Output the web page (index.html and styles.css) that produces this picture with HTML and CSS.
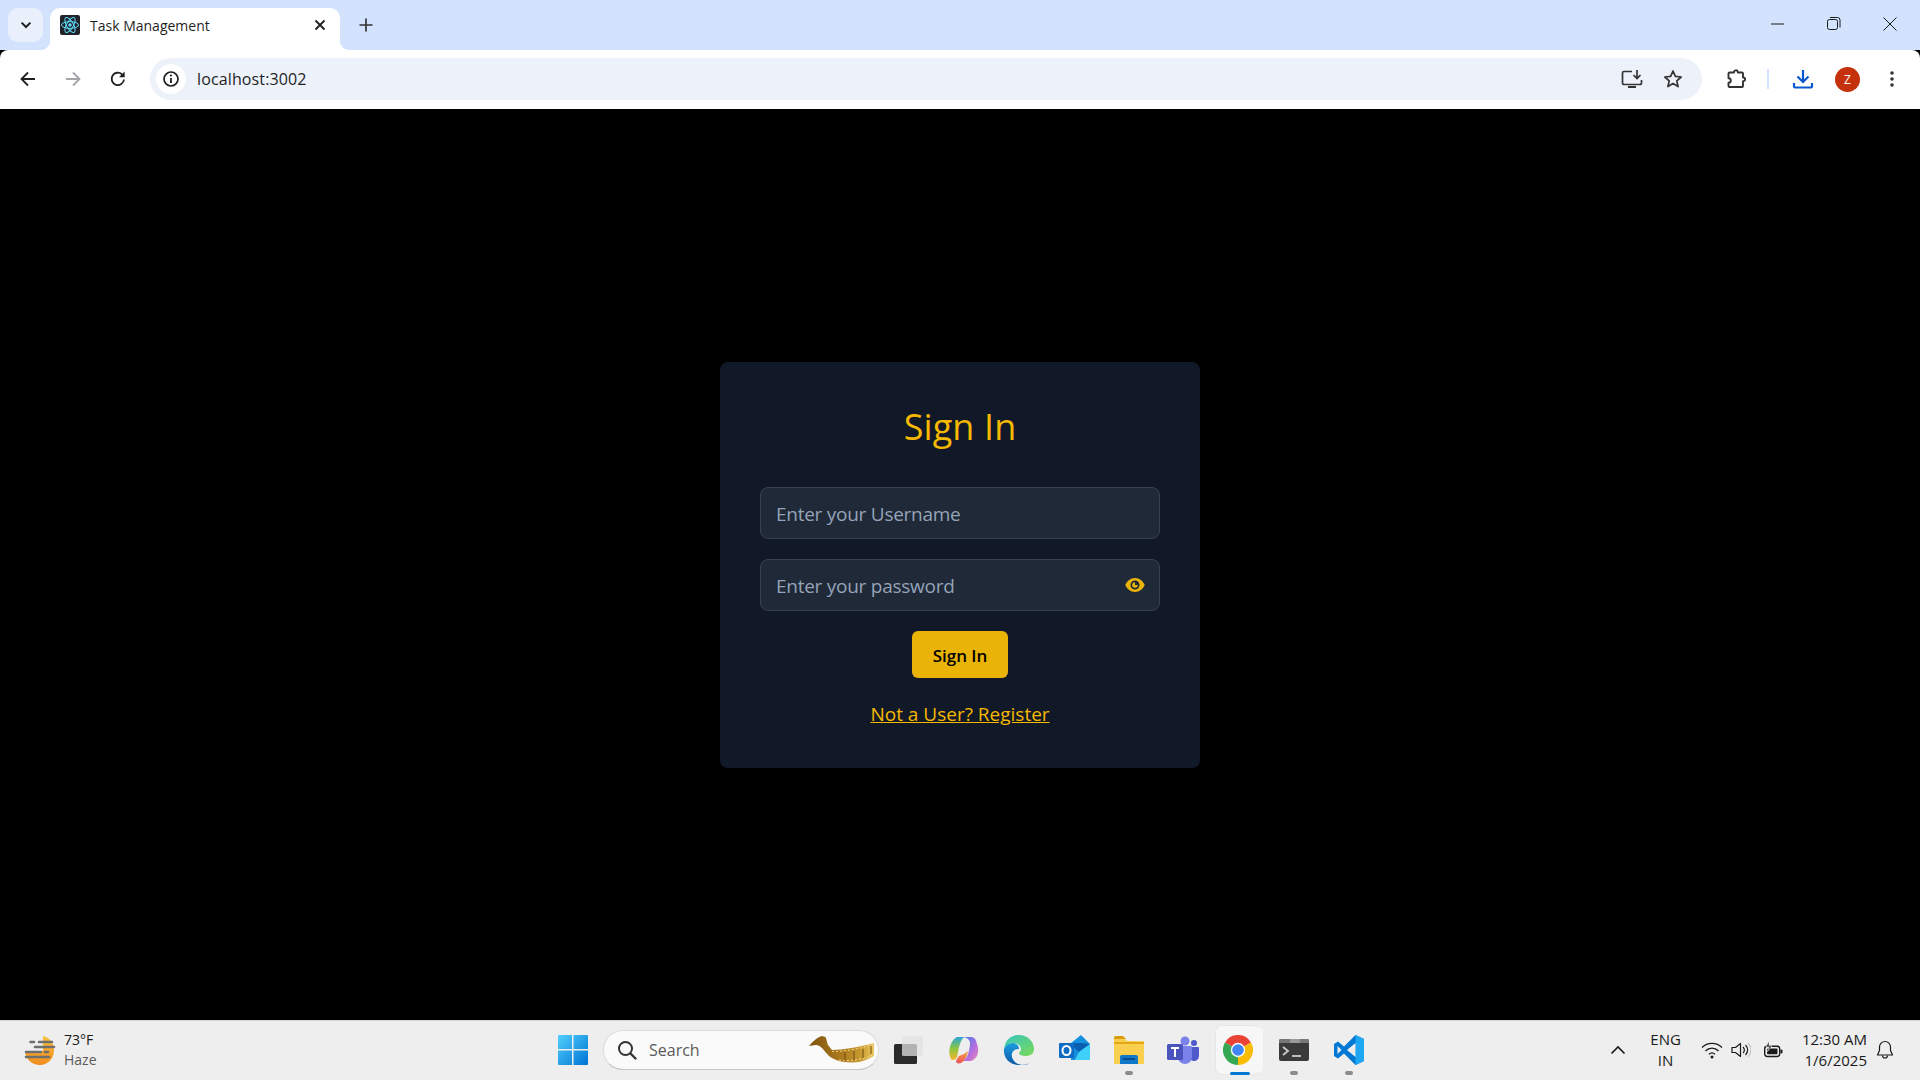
FILE: index.html
```html
<!DOCTYPE html>
<html lang="en">
<head>
<meta charset="utf-8">
<title>Task Management</title>
<link rel="stylesheet" href="styles.css">
</head>
<body>
<div class="tabstrip">
  <button class="tab-search" aria-label="Search tabs">
    <svg width="16" height="16" viewBox="0 0 16 16"><path d="M3.600 5.600 8 10l4.400-4.400" fill="none" stroke="#1f1f1f" stroke-width="2"/></svg>
  </button>
  <div class="tab">
    <svg class="favicon" width="20" height="20" viewBox="0 0 20 20">
      <rect width="20" height="20" rx="2" fill="#20232a"/>
      <g fill="none" stroke="#61dafb" stroke-width="1">
        <ellipse cx="10" cy="10" rx="8.500" ry="3.400"/>
        <ellipse cx="10" cy="10" rx="8.500" ry="3.400" transform="rotate(60 10 10)"/>
        <ellipse cx="10" cy="10" rx="8.500" ry="3.400" transform="rotate(120 10 10)"/>
      </g>
      <circle cx="10" cy="10" r="1.700" fill="#61dafb"/>
    </svg>
    <span class="tab-title">Task Management</span>
    <svg class="tab-close" width="12" height="12" viewBox="0 0 12 12"><path d="M1.500 1.500l9 9M10.500 1.500l-9 9" stroke="#1f1f1f" stroke-width="1.800"/></svg>
  </div>
  <svg class="new-tab" width="14" height="14" viewBox="0 0 14 14"><path d="M7 .5v13M.5 7h13" stroke="#333" stroke-width="1.700"/></svg>
  <div class="win-controls">
    <svg width="14" height="14" viewBox="0 0 14 14"><path d="M0 7h13" stroke="#1a1a1a" stroke-width="1"/></svg>
    <svg width="14" height="14" viewBox="0 0 14 14"><rect x=".5" y="2.500" width="10" height="10" rx="2" fill="none" stroke="#1a1a1a"/><path d="M3 .5h7.500a2.500 2.500 0 0 1 2.500 2.500v7.500" fill="none" stroke="#1a1a1a"/></svg>
    <svg width="14" height="14" viewBox="0 0 14 14"><path d="M.5.5l13 13M13.500.5l-13 13" stroke="#1a1a1a" stroke-width="1"/></svg>
  </div>
</div>

<div class="toolbar">
  <svg class="nav" width="18" height="18" viewBox="0 0 18 18"><path d="M16 9H2.500M9 2.500 2.500 9 9 15.500" fill="none" stroke="#1f1f1f" stroke-width="1.800"/></svg>
  <svg class="nav" width="18" height="18" viewBox="0 0 18 18"><path d="M2 9h13.500M9 2.500 15.500 9 9 15.500" fill="none" stroke="#a3a5a8" stroke-width="1.800"/></svg>
  <svg class="nav" width="18" height="18" viewBox="0 0 18 18"><path d="M15 9.500A6.200 6.200 0 1 1 13 4.300L15 6.300" fill="none" stroke="#1f1f1f" stroke-width="1.800"/><path d="M15.600 1.600v5.600h-5.600z" fill="#1f1f1f"/></svg>
  <div class="omnibox">
    <span class="site-info">
      <svg width="18" height="18" viewBox="0 0 18 18"><circle cx="9" cy="9" r="7" fill="none" stroke="#1f1f1f" stroke-width="1.700"/><path d="M9 8v5" stroke="#1f1f1f" stroke-width="1.800"/><circle cx="9" cy="5.500" r="1.100" fill="#1f1f1f"/></svg>
    </span>
    <span class="url">localhost:3002</span>
    <span class="spacer"></span>
    <svg class="omni-icon" width="22" height="20" viewBox="0 0 22 20"><path d="M11 2.500H3A1.500 1.500 0 0 0 1.500 4v10A1.500 1.500 0 0 0 3 15.500h16a1.500 1.500 0 0 0 1.500-1.500v-3" fill="none" stroke="#333" stroke-width="1.700"/><path d="M7 18h8" stroke="#333" stroke-width="2"/><path d="M16 1v8M12.500 6l3.500 3.500L19.500 6" fill="none" stroke="#333" stroke-width="1.700"/></svg>
    <svg class="omni-icon star" width="20" height="20" viewBox="0 0 20 20"><path d="M10 2l2.400 5.400 5.800.6-4.400 3.900 1.300 5.700-5.100-3-5.100 3 1.300-5.700L1.800 8l5.800-.6z" fill="none" stroke="#333" stroke-width="1.700" stroke-linejoin="round"/></svg>
  </div>
  <div class="tools">
    <svg width="20" height="20" viewBox="0 0 20 20"><path d="M8 3.500V2.800a2 2 0 0 1 3.500-.8l.4 1.500H16a1 1 0 0 1 1 1v4h.3a1.800 1.800 0 0 1 0 3.600H17V17a1 1 0 0 1-1 1H3.500a1 1 0 0 1-1-1v-3.200a2.200 2.200 0 0 0 0-4.600V4.500a1 1 0 0 1 1-1z" fill="none" stroke="#333" stroke-width="1.900" stroke-linejoin="round"/></svg>
    <span class="tool-sep"></span>
    <svg class="dl" width="22" height="22" viewBox="0 0 22 22"><path d="M11 2v12M5.500 8.500 11 14l5.500-5.500" fill="none" stroke="#0b57d0" stroke-width="2.200"/><path d="M2 15v3.500a1 1 0 0 0 1 1h16a1 1 0 0 0 1-1V15" fill="none" stroke="#0b57d0" stroke-width="2.200"/></svg>
    <span class="avatar">Z</span>
    <svg class="menu" width="6" height="18" viewBox="0 0 6 18"><circle cx="3" cy="3" r="1.800" fill="#333"/><circle cx="3" cy="9" r="1.800" fill="#333"/><circle cx="3" cy="15" r="1.800" fill="#333"/></svg>
  </div>
</div>

<main class="page">
  <form class="card">
    <h1 class="card-title">Sign In</h1>
    <div class="field"><span class="ph">Enter your Username</span></div>
    <div class="field"><span class="ph">Enter your password</span>
      <svg width="20" height="16" viewBox="0 0 20 16"><path fill-rule="evenodd" d="M10 1C5.500 1 2 4.200.3 8 2 11.800 5.500 15 10 15s8-3.200 9.700-7C18 4.200 14.500 1 10 1zm0 2.500a4.500 4.500 0 1 1 0 9 4.500 4.500 0 0 1 0-9z" fill="#eab308"/><path d="M10 5.200a2.800 2.800 0 1 0 2.800 2.800h-2.800z" fill="#eab308"/></svg>
    </div>
    <button class="submit" type="button">Sign In</button>
    <a class="register" href="#">Not a User? Register</a>
  </form>
</main>

<footer class="taskbar">
  <div class="weather">
    <svg width="32" height="30" viewBox="0 0 32 30">
      <defs><linearGradient id="sun" x1="0" y1="0" x2="0" y2="1"><stop offset="0" stop-color="#f8c23c"/><stop offset="1" stop-color="#f28c1c"/></linearGradient></defs>
      <path d="M19 1a14 14 0 0 1 11 14 14.500 14.500 0 0 1-29 1h18z" fill="url(#sun)"/>
      <g stroke="#6f6f6f" stroke-width="2.600" stroke-linecap="round">
        <path d="M6.500 7h3.500M15 7h13M11 12h19M2 17h15M21 17h3M2 22h23"/>
      </g>
    </svg>
    <div class="weather-text"><span class="temp">73°F</span><span class="cond">Haze</span></div>
  </div>

  <div class="centre">
    <svg class="start" width="30" height="30" viewBox="0 0 30 30">
      <defs><linearGradient id="win" x1="0" y1="0" x2="1" y2="1"><stop offset="0" stop-color="#4fd0fd"/><stop offset="1" stop-color="#0073d3"/></linearGradient></defs>
      <path d="M1 0h13v14H0V1a1 1 0 0 1 1-1zM15.500 0H29a1 1 0 0 1 1 1v13H15.500zM0 15.500h14V30H1a1 1 0 0 1-1-1zM15.500 15.500H30V29a1 1 0 0 1-1 1H15.500z" fill="url(#win)"/>
    </svg>
    <div class="search">
      <svg width="20" height="20" viewBox="0 0 20 20"><circle cx="8.500" cy="8.500" r="6.500" fill="none" stroke="#333" stroke-width="2"/><path d="M13.500 13.500 18.500 18.500" stroke="#333" stroke-width="2.400" stroke-linecap="round"/></svg>
      <span class="search-label">Search</span>
      <span class="spacer"></span>
      <svg class="film" width="67" height="27" viewBox="0 0 67 27">
        <defs><linearGradient id="gold" x1="0" y1="0" x2="1" y2="0"><stop offset="0" stop-color="#7d5310"/><stop offset=".45" stop-color="#a8761c"/><stop offset=".8" stop-color="#c99a30"/><stop offset="1" stop-color="#ecc862"/></linearGradient></defs>
        <path d="M0 10 C4 5 9 1 13 0 L16.500 1 C18 4 18 7 19 9 L23 14 C34 14 50 11 65 7 L65 20 C60 23 55 25 50 26 C42 27 34 26 30 25 C25 23 22 22 20 20 C17 17 15 14 13 12 C11 10 9 9 7 9 C4 9 2 10 0 10 Z" fill="url(#gold)"/>
        <path d="M23 15.500C36 15.500 51 12.500 65 8.500M30 24C42 25.500 54 23.500 65 18.500" stroke="#f0d98a" stroke-width="1" fill="none" stroke-dasharray="2 2"/>
        <path d="M36 16.500v8M45 15v9M54 13v9M62 10v8" stroke="#6e4a12" stroke-width="1"/>
      </svg>
    </div>
    <svg class="app taskview" width="30" height="30" viewBox="0 0 30 30">
      <rect x="1" y="9" width="23" height="20" rx="1.500" fill="#2a2a2a"/>
      <rect x="9" y="1" width="21" height="20" rx="1.500" fill="#e2e2e2" fill-opacity=".75"/>
    </svg>
    <svg class="app copilot" width="32" height="32" viewBox="0 0 32 32">
      <defs>
        <linearGradient id="cp1" x1="0" y1="0" x2="0" y2="1"><stop offset="0" stop-color="#2aa5d8"/><stop offset=".5" stop-color="#8cc63f"/><stop offset="1" stop-color="#f7b32b"/></linearGradient>
        <linearGradient id="cp2" x1="0" y1="0" x2="1" y2="1"><stop offset="0" stop-color="#3b7de8"/><stop offset=".6" stop-color="#b66fe0"/><stop offset="1" stop-color="#f08ab0"/></linearGradient>
        <linearGradient id="cp3" x1="0" y1="0" x2="0" y2="1"><stop offset="0" stop-color="#f5a33a"/><stop offset="1" stop-color="#ee4f5c"/></linearGradient>
      </defs>
      <path d="M9 3h7c-4 4-5 10-7 20-1 2-2 3-5 3C0 22 0 8 9 3z" fill="url(#cp1)"/>
      <path d="M15 3h8c4 0 5 3 6 7 3 8 0 14-4 16-1 1-2 1-4 1h-6c5-3 6-10 7-16 .5-4-1-7-7-8z" fill="url(#cp2)"/>
      <path d="M11 22c3-1 7-3 9-5-1 5-3 10-7 12-3 1-5 0-5-2 1-2 2-4 3-5z" fill="url(#cp3)"/>
    </svg>
    <svg class="app tight" width="32" height="32" viewBox="0 0 32 32">
      <defs>
        <linearGradient id="ed1" x1="0" y1="0" x2="1" y2="1"><stop offset="0" stop-color="#33c6c0"/><stop offset="1" stop-color="#7cd957"/></linearGradient>
        <linearGradient id="ed2" x1="0" y1="0" x2="0" y2="1"><stop offset="0" stop-color="#1b9de2"/><stop offset="1" stop-color="#0c59a4"/></linearGradient>
      </defs>
      <path d="M1 15C2 6 8 1 16 1c9 0 15 7 15 14 0 5-4 7-8 7-4 0-7-1-7-3 0-1 2-1 2-4 0-3-3-6-7-6-5 0-8 3-10 6z" fill="url(#ed1)"/>
      <path d="M1 15c2-4 5-6 9-6 4 0 6 3 6 6-5 0-8 3-7 8 1 4 5 8 11 8 2 0 4 0 6-2-3 2-6 2-10 2C7 31 0 24 1 15z" fill="url(#ed2)"/>
    </svg>
    <svg class="app" width="32" height="32" viewBox="0 0 32 32">
      <path d="M12 9 22 1l9 9v14a2 2 0 0 1-2 2H12z" fill="#1490df"/>
      <path d="M10 9h12l9 1-11 8z" fill="#0a5fb0"/>
      <path d="M16 26 20 18 31 10v14a2 2 0 0 1-2 2z" fill="#3ed0f8"/>
      <rect x="0" y="9" width="15" height="15" rx="1" fill="#0f6cc4"/>
      <ellipse cx="7.500" cy="16.500" rx="4" ry="4.600" fill="none" stroke="#fff" stroke-width="2"/>
    </svg>
    <div class="pin tight">
      <svg width="30" height="28" viewBox="0 0 30 28">
        <path d="M0 2a2 2 0 0 1 2-2h7l3 3h-12z" fill="#d99c0a"/>
        <path d="M0 3h11l2 2h16a1 1 0 0 1 1 1v21a1 1 0 0 1-1 1H1a1 1 0 0 1-1-1z" fill="#f8cf4e"/>
        <path d="M0 6h30v2H0z" fill="#e3a915"/>
        <path d="M6 28v-7a2 2 0 0 1 2-2h14a2 2 0 0 1 2 2v7z" fill="#0f78c9"/>
        <path d="M9 23h12" stroke="#063f78" stroke-width="1.500"/>
      </svg>
    </div>
    <svg class="app tight" width="32" height="28" viewBox="0 0 32 28">
      <circle cx="18" cy="5" r="4.500" fill="#7b83eb"/><circle cx="27" cy="7" r="3" fill="#5059c9"/>
      <path d="M22 11h9a1 1 0 0 1 1 1v8a5 5 0 0 1-8 4z" fill="#5059c9"/>
      <path d="M11 10h13a1 1 0 0 1 1 1v10a7 7 0 0 1-14 0z" fill="#7b83eb"/>
      <rect x="0" y="8" width="16" height="16" rx="1.500" fill="#4b53bc"/>
      <path d="M4 12h8M8 12v9" stroke="#fff" stroke-width="2"/>
    </svg>
    <div class="chrome-slot">
      <svg width="30" height="30" viewBox="0 0 30 30">
        <path d="M15 15 2 7.500A15 15 0 0 1 28 7.500z" fill="#ea4335"/>
        <path d="M15 15 28 7.500A15 15 0 0 1 15 30z" fill="#fbbc04"/>
        <path d="M15 15 15 30A15 15 0 0 1 2 7.500z" fill="#34a853"/>
        <circle cx="15" cy="15" r="7.200" fill="#fff"/><circle cx="15" cy="15" r="5.800" fill="#4285f4"/>
      </svg>
    </div>
    <div class="pin after-chrome">
      <svg width="30" height="22" viewBox="0 0 30 22">
        <rect width="30" height="22" rx="2" fill="#3a3a3a"/>
        <path d="M0 2a2 2 0 0 1 2-2h9v4H0z" fill="#777"/><path d="M11 0h10v4H11z" fill="#999"/><path d="M21 0h7a2 2 0 0 1 2 2v2h-9z" fill="#777"/>
        <path d="M4 8l5 4-5 4" fill="none" stroke="#ccc" stroke-width="1.800"/><path d="M13 17h9" stroke="#ccc" stroke-width="1.800"/>
      </svg>
    </div>
    <div class="pin wide">
      <svg width="30" height="30" viewBox="0 0 30 30">
        <path d="M21.500 0 30 4v22l-8.500 4L10 18.500 4 23.500 0 21V9l4-2.500 6 5z" fill="#0078d4"/>
        <path d="M21.500 0 30 4v22l-8.500 4z" fill="#1fa7f3"/>
        <path d="M21.500 8 13 15l8.500 7z" fill="#eee"/>
        <path d="M3.500 11v8l4-4z" fill="#eee"/>
      </svg>
    </div>
  </div>

  <div class="tray">
    <svg class="chev" width="16" height="10" viewBox="0 0 16 10"><path d="M1.500 8.500 8 2l6.500 6.500" fill="none" stroke="#1a1a1a" stroke-width="1.600"/></svg>
    <div class="lang"><span>ENG</span><span>IN</span></div>
    <svg width="22" height="18" viewBox="0 0 22 18"><g fill="none" stroke="#1a1a1a" stroke-width="1.300"><path d="M1 6.500a14 14 0 0 1 20 0"/><path d="M4.500 10a9 9 0 0 1 13 0"/><path d="M8 13.200a4.500 4.500 0 0 1 6 0"/></g><circle cx="11" cy="16" r="1.500" fill="#1a1a1a"/></svg>
    <svg width="20" height="18" viewBox="0 0 20 18"><path d="M1 6.500h3.500L9.500 2.500v13l-5-4H1z" fill="none" stroke="#1a1a1a" stroke-width="1.200" stroke-linejoin="round"/><path d="M12 6a4 4 0 0 1 0 6" fill="none" stroke="#1a1a1a" stroke-width="1.200"/><path d="M14.500 4a7 7 0 0 1 0 10" fill="none" stroke="#1a1a1a" stroke-width="1.200"/><path d="M17 2a10 10 0 0 1 0 14" fill="none" stroke="#c4c4c4" stroke-width="1.200"/></svg>
    <svg class="battery" width="20" height="18" viewBox="0 0 20 18"><rect x="1.700" y="5.200" width="15" height="10.300" rx="2.500" fill="none" stroke="#1a1a1a" stroke-width="1.400"/><rect x="4" y="7.500" width="10.500" height="5.800" rx="1" fill="#1a1a1a"/><rect x="17.500" y="8.500" width="2" height="4" rx="1" fill="#1a1a1a"/><path d="M6 0 3 6h3L4.500 10.500 9 5H6z" fill="#1a1a1a" stroke="#eee" stroke-width=".6"/></svg>
    <div class="clock"><span>12:30 AM</span><span>1/6/2025</span></div>
    <svg class="bell" width="18" height="20" viewBox="0 0 18 20"><path d="M9 1.500a5.500 5.500 0 0 0-5.500 5.500v3.500L1.500 15h15l-2-4.500V7A5.500 5.500 0 0 0 9 1.500z" fill="none" stroke="#1a1a1a" stroke-width="1.200" stroke-linejoin="round"/><path d="M6.500 15.500a2.500 2.500 0 0 0 5 0" fill="none" stroke="#1a1a1a" stroke-width="1.200"/></svg>
  </div>
</footer>
</body>
</html>
```
FILE: styles.css
```css
* { box-sizing: border-box; }
html, body { margin: 0; height: 100%; }
body {
  display: flex;
  flex-direction: column;
  height: 100vh;
  overflow: hidden;
  font-family: "Open Sans", "Noto Sans", sans-serif;
  background: #000;
}
svg { display: block; flex: none; }
.spacer { flex: 1; }

/* tab strip */
.tabstrip {
  height: 50px;
  flex: none;
  background: #d3e3fd;
  display: flex;
  align-items: flex-start;
  padding: 8px 0 0 8px;
}
.tab-search {
  width: 35px;
  height: 34px;
  margin: 0;
  border: 0;
  border-radius: 10px;
  background: #e9f0fc;
  display: flex;
  align-items: center;
  justify-content: center;
  padding: 0;
}
.tab {
  position: relative;
  width: 290px;
  height: 42px;
  margin-left: 7px;
  background: #fff;
  border-radius: 10px 10px 0 0;
  display: flex;
  align-items: center;
  padding: 0 14px 8px 10px;
}
.tab::before, .tab::after {
  content: "";
  position: absolute;
  bottom: 0;
  width: 10px;
  height: 10px;
}
.tab::before { left: -10px; background: radial-gradient(circle at 0 0, transparent 10px, #fff 10.500px); }
.tab::after { right: -10px; background: radial-gradient(circle at 100% 0, transparent 10px, #fff 10.500px); }
.tab-title {
  margin-left: 10px;
  flex: 1;
  font-size: 14px;
  color: #1f1f1f;
}
.new-tab { margin: 10px 0 0 19px; }
.win-controls {
  margin-left: auto;
  display: flex;
  gap: 42px;
  padding: 9px 23px 0 0;
}

/* toolbar */
.toolbar {
  height: 59px;
  flex: none;
  background: #fff;
  border-radius: 8px 8px 0 0;
  display: flex;
  align-items: center;
  padding: 0 0 0 19px;
  gap: 27px;
  position: relative;
}
.omnibox {
  width: 1552px;
  height: 42px;
  margin-left: -4px;
  margin-top: -1px;
  border-radius: 21px;
  background: #ecf1fa;
  display: flex;
  align-items: center;
  padding: 0 19px 0 6px;
}
.nav { margin-top: -1px; }
.site-info {
  width: 30px;
  height: 30px;
  border-radius: 50%;
  background: #fff;
  display: flex;
  align-items: center;
  justify-content: center;
}
.url {
  margin-left: 11px;
  font-size: 16px;
  letter-spacing: .13px;
  color: #1f1f1f;
}
.omni-icon.star { margin-left: 20px; }
.tools {
  display: flex;
  align-items: center;
  margin-left: -3px;
  margin-top: -1px;
}
.tool-sep { width: 2px; height: 20px; background: #d3e3fd; margin: 0 23px 0 21px; }
.avatar {
  width: 25px;
  height: 25px;
  margin-left: 21px;
  border-radius: 50%;
  background: #c5310c;
  color: #fff;
  font-size: 12px;
  display: flex;
  align-items: center;
  justify-content: center;
}
.menu { margin-left: 29px; }

/* page */
.page {
  flex: 1;
  min-height: 0;
  background: #000;
  display: flex;
  align-items: center;
  justify-content: center;
  padding-top: 1px;
}
.card {
  width: 480px;
  height: 406px;
  background: #111827;
  border-radius: 8px;
  padding: 40px;
  display: flex;
  flex-direction: column;
  align-items: center;
}
.card-title {
  margin: 0 0 36px;
  height: 49px;
  font-size: 36px;
  line-height: 49px;
  font-weight: 400;
  letter-spacing: .1px;
  color: #f6b900;
}
.field {
  width: 400px;
  height: 52px;
  flex: none;
  margin-bottom: 20px;
  background: #1f2937;
  border: 1px solid #374151;
  border-radius: 8px;
  padding: 2px 14px 0 15px;
  display: flex;
  align-items: center;
  justify-content: space-between;
}
.field svg { margin-top: -2px; }
.ph {
  font-size: 19px;
  letter-spacing: -.26px;
  color: #94a3b8;
}
.submit {
  width: 96px;
  height: 47px;
  border: 0;
  border-radius: 6px;
  background: #eab308;
  color: #000;
  padding: 1px 0 0;
  font-family: inherit;
  font-size: 17px;
  font-weight: 600;
}
.register {
  margin-top: 23px;
  font-size: 19px;
  color: #f6b900;
  text-decoration: underline;
}

/* taskbar */
.taskbar {
  height: 60px;
  flex: none;
  background: #eeeeee;
  border-top: 1px solid #d5d5d5;
  display: flex;
  align-items: center;
  padding: 0 0 2px 24px;
}
.weather {
  width: 534px;
  display: flex;
  align-items: center;
  gap: 8px;
  flex: none;
}
.weather-text {
  display: flex;
  flex-direction: column;
  font-size: 14px;
  line-height: 20px;
  color: #1a1a1a;
}
.lang, .clock {
  display: flex;
  flex-direction: column;
  font-size: 15px;
  line-height: 21px;
  color: #1a1a1a;
}
.cond { color: #5c5c5c; }
.centre { display: flex; align-items: center; }
.search {
  width: 276px;
  height: 40px;
  margin-left: 15px;
  border-radius: 20px;
  background: #fafafa;
  border: 1px solid #dcdcdc;
  border-bottom-color: #c4c4c4;
  display: flex;
  align-items: center;
  padding: 0 2px 0 13px;
}
.search-label {
  margin-left: 12px;
  font-size: 16px;
  color: #5a5a5a;
}
.app { margin-left: 24px; }
.taskview { margin-left: 14px; }
.copilot { margin-left: 25px; }
.tight { margin-left: 23px; }
.pin {
  position: relative;
  margin-left: 24px;
  display: flex;
  align-items: center;
  height: 30px;
}
.pin.tight { margin-left: 23px; }
.pin.after-chrome { margin-left: 19px; }
.pin.wide { margin-left: 25px; }
.pin::after {
  content: "";
  position: absolute;
  left: 50%;
  bottom: -10px;
  width: 8px;
  height: 4px;
  margin-left: -4px;
  border-radius: 2px;
  background: #8b8b8b;
}
.chrome-slot {
  width: 44px;
  height: 48px;
  margin-left: 17px;
  border-radius: 6px;
  background: #f7f7f7;
  box-shadow: 4px 0 0 -1px #f7f7f7, 0 0 0 1px #e6e6e6;
  display: flex;
  align-items: center;
  justify-content: center;
  position: relative;
}
.chrome-slot::after {
  content: "";
  position: absolute;
  left: 14px;
  bottom: -1px;
  width: 20px;
  height: 3px;
  border-radius: 2px;
  background: #0078d4;
}
.tray {
  margin-left: auto;
  display: flex;
  align-items: center;
  gap: 8px;
  padding-right: 26px;
}
.lang { align-items: center; margin: 0 12px 0 16px; }
.battery { margin-left: 4px; }
.clock { align-items: flex-end; margin-left: 11px; }
.bell { margin-left: 1px; }
```
